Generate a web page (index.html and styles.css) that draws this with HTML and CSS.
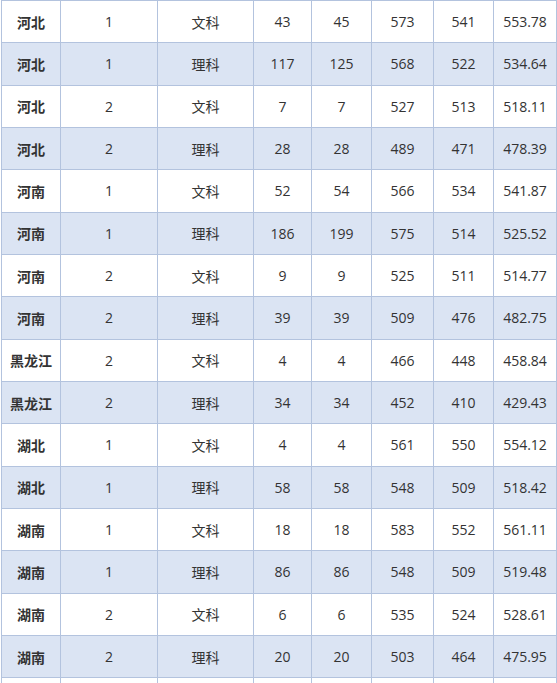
FILE: index.html
```html
<!DOCTYPE html>
<html lang="zh">
<head>
<meta charset="utf-8">
<title>分数表</title>
<link rel="stylesheet" href="styles.css">
</head>
<body>
<table class="scores">
<colgroup>
<col class="c1"><col class="c2"><col class="c3"><col class="c4"><col class="c5"><col class="c6"><col class="c7"><col class="c8">
</colgroup>
<tbody>
<tr><td class="prov">河北</td><td>1</td><td>文科</td><td>43</td><td>45</td><td>573</td><td>541</td><td>553.78</td></tr>
<tr class="alt"><td class="prov">河北</td><td>1</td><td>理科</td><td>117</td><td>125</td><td>568</td><td>522</td><td>534.64</td></tr>
<tr><td class="prov">河北</td><td>2</td><td>文科</td><td>7</td><td>7</td><td>527</td><td>513</td><td>518.11</td></tr>
<tr class="alt"><td class="prov">河北</td><td>2</td><td>理科</td><td>28</td><td>28</td><td>489</td><td>471</td><td>478.39</td></tr>
<tr><td class="prov">河南</td><td>1</td><td>文科</td><td>52</td><td>54</td><td>566</td><td>534</td><td>541.87</td></tr>
<tr class="alt"><td class="prov">河南</td><td>1</td><td>理科</td><td>186</td><td>199</td><td>575</td><td>514</td><td>525.52</td></tr>
<tr><td class="prov">河南</td><td>2</td><td>文科</td><td>9</td><td>9</td><td>525</td><td>511</td><td>514.77</td></tr>
<tr class="alt"><td class="prov">河南</td><td>2</td><td>理科</td><td>39</td><td>39</td><td>509</td><td>476</td><td>482.75</td></tr>
<tr><td class="prov">黑龙江</td><td>2</td><td>文科</td><td>4</td><td>4</td><td>466</td><td>448</td><td>458.84</td></tr>
<tr class="alt"><td class="prov">黑龙江</td><td>2</td><td>理科</td><td>34</td><td>34</td><td>452</td><td>410</td><td>429.43</td></tr>
<tr><td class="prov">湖北</td><td>1</td><td>文科</td><td>4</td><td>4</td><td>561</td><td>550</td><td>554.12</td></tr>
<tr class="alt"><td class="prov">湖北</td><td>1</td><td>理科</td><td>58</td><td>58</td><td>548</td><td>509</td><td>518.42</td></tr>
<tr><td class="prov">湖南</td><td>1</td><td>文科</td><td>18</td><td>18</td><td>583</td><td>552</td><td>561.11</td></tr>
<tr class="alt"><td class="prov">湖南</td><td>1</td><td>理科</td><td>86</td><td>86</td><td>548</td><td>509</td><td>519.48</td></tr>
<tr><td class="prov">湖南</td><td>2</td><td>文科</td><td>6</td><td>6</td><td>535</td><td>524</td><td>528.61</td></tr>
<tr class="alt"><td class="prov">湖南</td><td>2</td><td>理科</td><td>20</td><td>20</td><td>503</td><td>464</td><td>475.95</td></tr>
<tr><td class="prov">&nbsp;</td><td>&nbsp;</td><td>&nbsp;</td><td>&nbsp;</td><td>&nbsp;</td><td>&nbsp;</td><td>&nbsp;</td><td>&nbsp;</td></tr>
</tbody>
</table>
</body>
</html>
```
FILE: styles.css
```css
html, body {
  margin: 0;
  padding: 0;
  background: #ffffff;
}
body {
  overflow: hidden;
}
.scores {
  border-collapse: collapse;
  table-layout: fixed;
  width: 555px;
  margin: 0 0 0 1px;
  font-family: "Open Sans", "Noto Sans CJK SC", sans-serif;
  font-size: 14px;
  color: #333333;
}
.c1 { width: 59px; }
.c2 { width: 97px; }
.c3 { width: 96px; }
.c4 { width: 58px; }
.c5 { width: 60px; }
.c6 { width: 62px; }
.c7 { width: 60px; }
.c8 { width: 63px; }
.scores tr {
  height: 42.33px;
}
.scores td {
  border: 1px solid #b3c3de;
  text-align: center;
  vertical-align: middle;
  padding: 0;
  white-space: nowrap;
}
.scores tr.alt td {
  background: #dbe4f3;
}
.scores td.prov {
  font-family: "Noto Sans CJK SC", sans-serif;
  font-weight: bold;
}
```
